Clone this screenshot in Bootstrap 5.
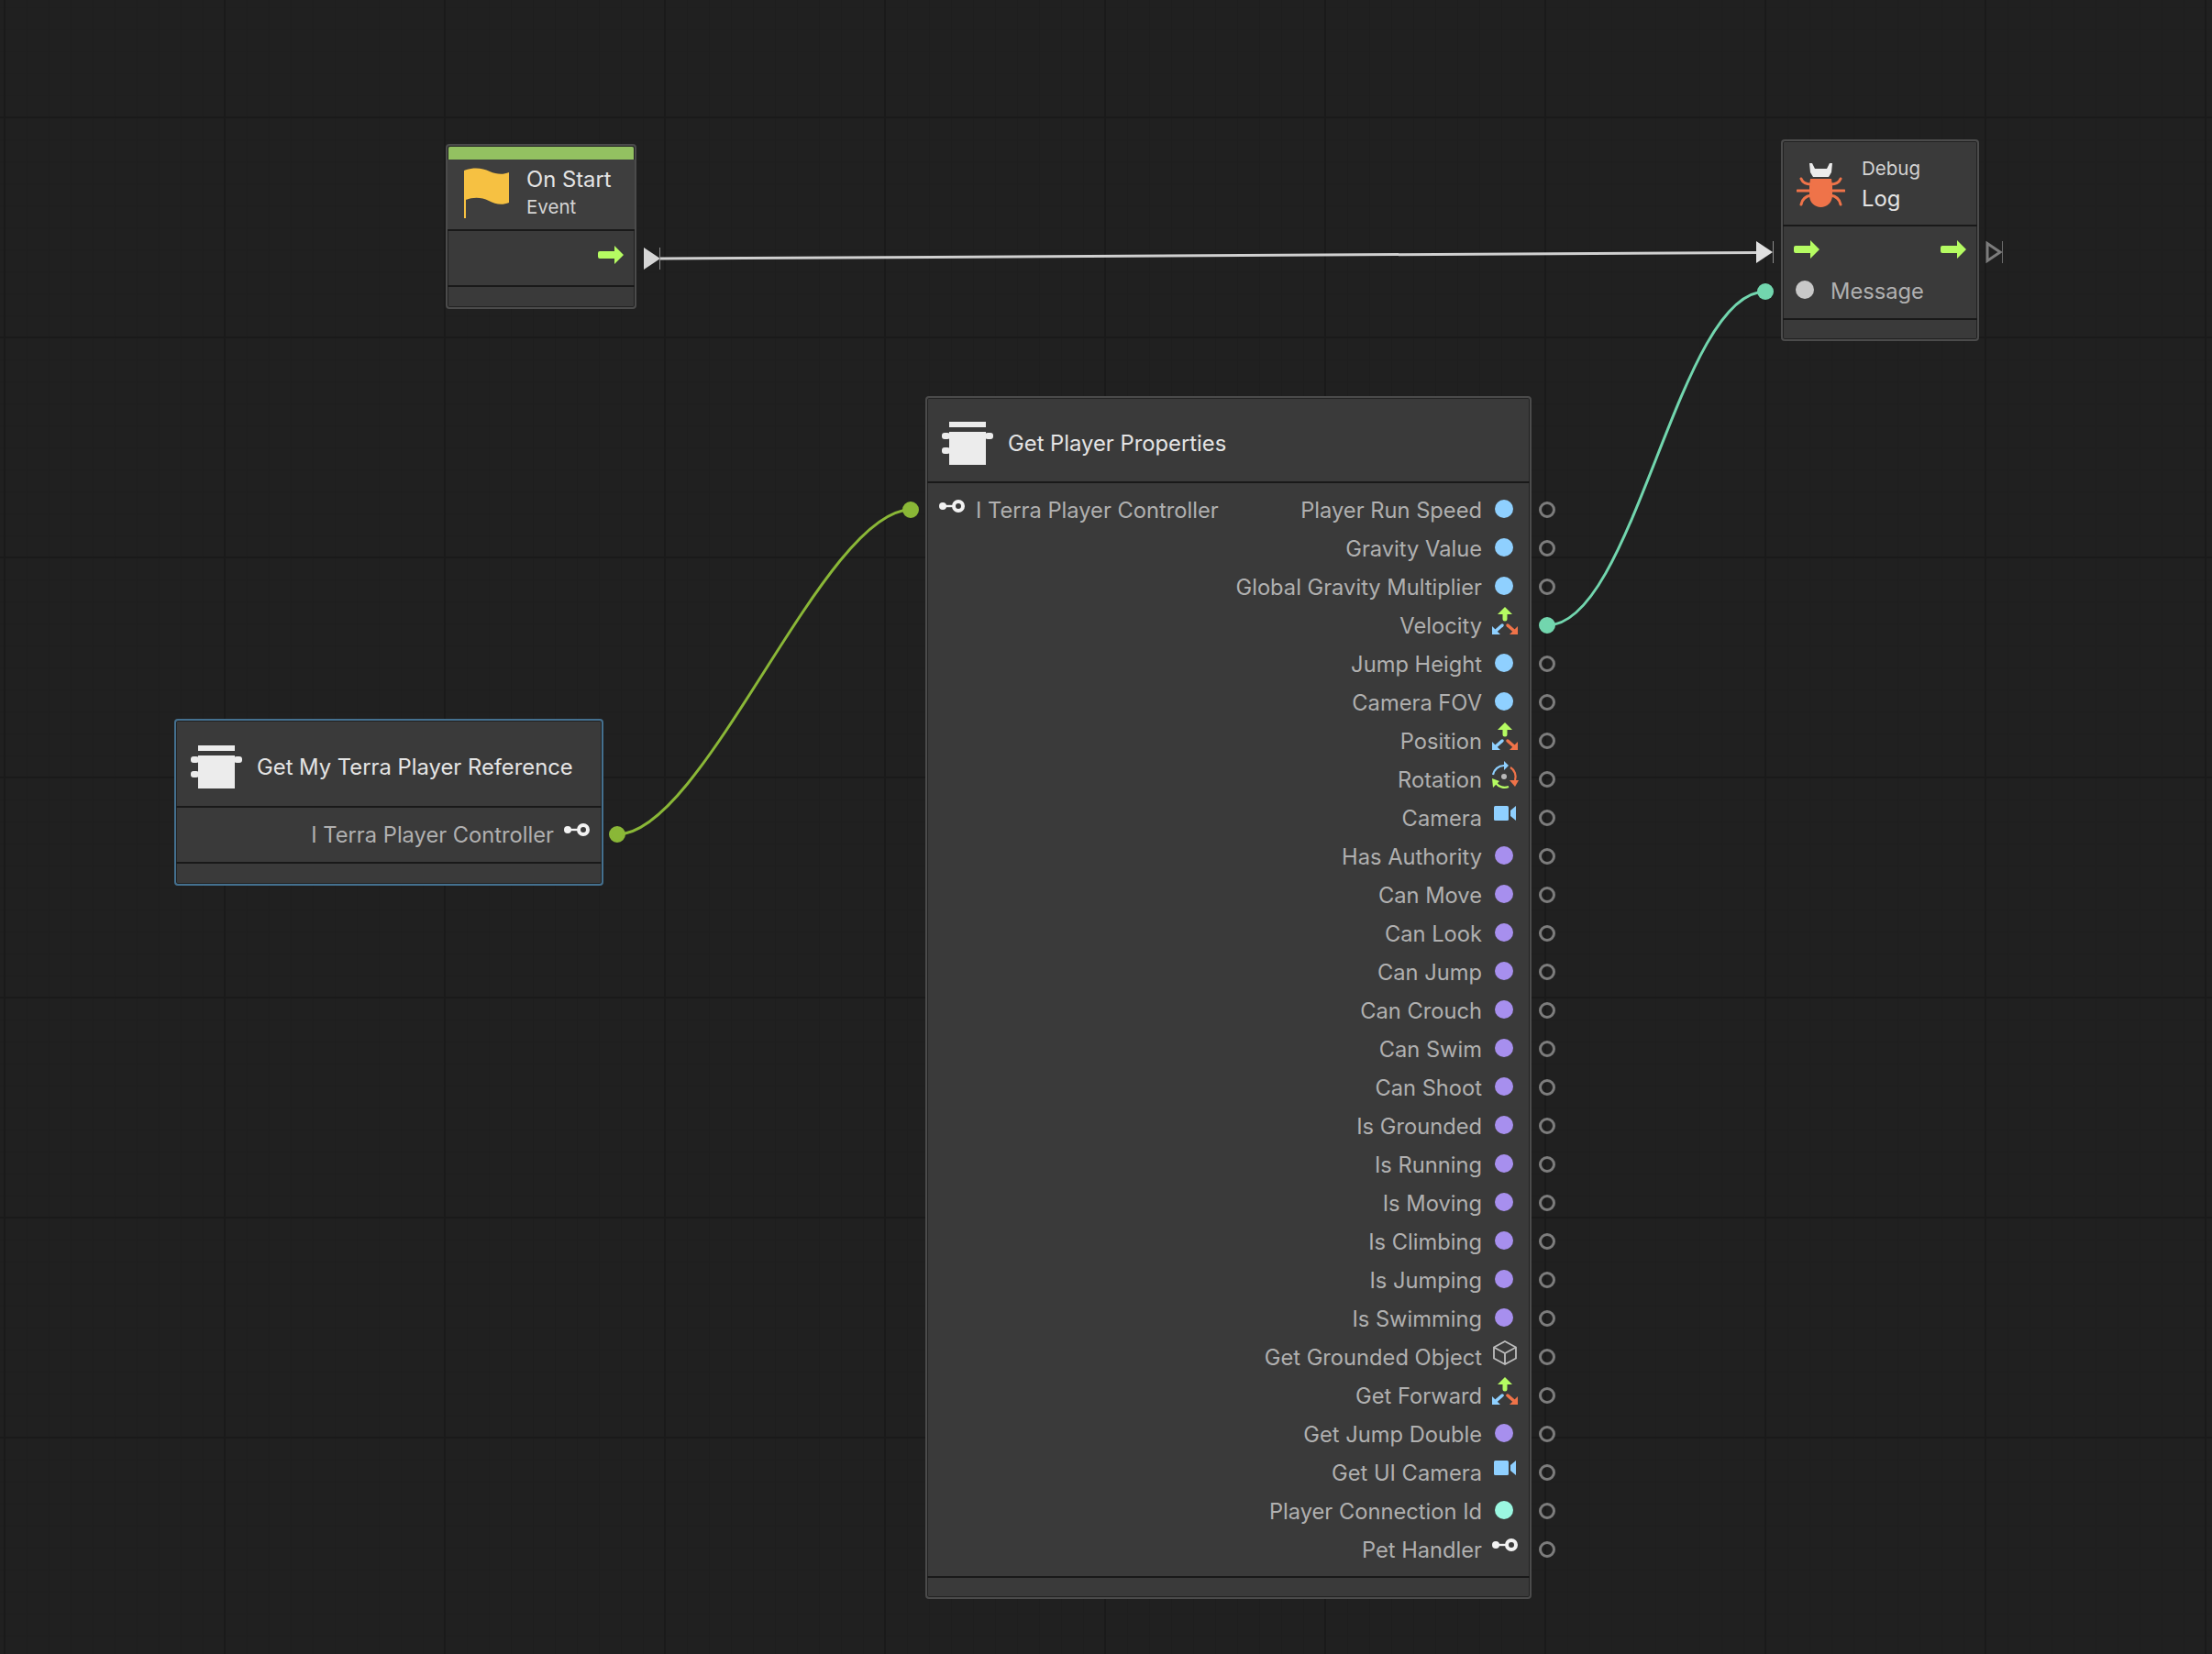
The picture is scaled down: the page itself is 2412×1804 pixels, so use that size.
<!DOCTYPE html>
<html lang="en">

<head>
    <meta charset="UTF-8">
    <title>Visual Script Graph</title>
    <link href="https://cdn.jsdelivr.net/npm/bootstrap@5.3.0/dist/css/bootstrap.min.css" rel="stylesheet">
    <style>
        html, body { height: 100%; margin: 0; background: #202020; }
        #graph {
            position: relative; width: 2412px; height: 1804px; overflow: hidden;
            font-family: "Inter", "Liberation Sans", sans-serif;
            background-color: #202020;
            background-image:
                linear-gradient(to right, #1a1a1a 2px, transparent 2px),
                linear-gradient(to bottom, #1a1a1a 2px, transparent 2px),
                linear-gradient(to right, #1e1e1e 1px, transparent 1px),
                linear-gradient(to bottom, #1e1e1e 1px, transparent 1px);
            background-size: 240px 240px, 240px 240px, 24px 24px, 24px 24px;
            background-position: 4px 0, 0 127px, 5px 0, 0 8px;
        }
        #wires { position: absolute; inset: 0; pointer-events: none; }

        /* nodes sit on a free canvas */
        .node {
            position: absolute;
            --bs-card-bg: #3a3a3a;
            --bs-card-border-width: 2px;
            --bs-card-border-color: #4b4b4b;
            --bs-card-border-radius: 4px;
            --bs-card-inner-border-radius: 2px;
            box-shadow: inset 0 0 0 1px #222;
        }
        .node-start { left: 486px; top: 157px; width: 208px; height: 180px; }
        .node-log { left: 1942px; top: 152px; width: 216px; height: 220px; }
        .node-ref { left: 190px; top: 784px; width: 468px; height: 182px; --bs-card-border-color: #44708f; }
        .node-props { left: 1009px; top: 432px; width: 661px; height: 1312px; }

        .node .card-header {
            background: transparent; height: 93px; flex: none;
            border-bottom: 2px solid #191919;
        }
        .node .card-body { padding: 8px 0; flex: 1 1 auto; }
        .node .card-footer { padding: 0; height: 24px; flex: none; background: transparent; border-top: 2px solid #191919; }
        .node-start .card-body { padding: 5px 0 0; }
        .node-log .card-body { padding: 7px 0 9px; }
        .node-ref .card-header { height: 95px; }

        .event-stripe { height: 14px; margin: 1px 1px 0; background: #93c161; border-radius: 2px 2px 0 0; }
        .node-title { font-size: 23.8px; color: #e4e4e4; line-height: 1; white-space: nowrap; }
        .node-sub { font-size: 20.5px; color: #d4d4d4; line-height: 1; white-space: nowrap; }
        .head-icon { flex: none; display: block; }

        .pin-row { position: relative; height: 42px; padding-right: 12px; }
        .pin-label { font-size: 23.7px; color: #b0b0b0; line-height: 1; white-space: nowrap; padding-top: 2px; }
        .pin-icon { flex: none; width: 30px; display: flex; justify-content: center; align-items: center; height: 42px; margin-left: 10px; }
        .pin-icon svg { display: block; margin-top: -10px; }
        .pin-dot { width: 20px; height: 20px; border-radius: 50%; margin: -3px 2px 0 0; flex: none; }
        .dot-float { background: #8fd0ff; }
        .dot-bool { background: #a78fee; }
        .dot-int { background: #9bf7e1; }
        .dot-string { background: #c8c8c8; }

        .pin-port {
            position: absolute; top: 50%; width: 18px; height: 18px; margin-top: -9px;
            border-radius: 50%; border: 3px solid #7c7c7c;
        }
        .port-right { right: -28px; }
        .port-left { left: -27px; }
        .port-teal { background: #72d6ae; border-color: #72d6ae; }
        .port-green { background: #8ab737; border-color: #8ab737; }
        .node-ref .port-right { right: -26px; }

        .node .h-start { height: 78px; padding: 0 0 4px 18px; gap: 18px; background: #3e3e3e; }
        .node .h-log { padding: 4px 0 0 15px; gap: 18px; }
        .node .h-func { padding: 8px 0 0 16px; gap: 16px; }
        .log-text { gap: 11px; }
        .flow-row { padding-left: 12px; margin-top: -3px; }
        .msg-row { padding-left: 14px; margin-top: 3px; }
        .msg-row .pin-label { margin-left: 16px; }
        .key-pin { padding-left: 13px; }
        .key-pin svg { margin-top: -8px; }
        .key-pin .pin-label { margin-left: 12px; }
    </style>
</head>

<body>
    <!-- iconos reutilizables -->
    <svg width="0" height="0" class="position-absolute">
        <defs>
            <symbol id="i-func" viewBox="0 0 56 47">
                <path fill="#ececec" d="M8 0h40v6H8zM8 11h40v36H8z"/>
                <rect x="0" y="12" width="9" height="7" rx="3" fill="#ececec"/>
                <rect x="0" y="28" width="9" height="7" rx="3" fill="#ececec"/>
                <rect x="47" y="12" width="9" height="7" rx="3" fill="#ececec"/>
            </symbol>
            <symbol id="i-flow" viewBox="0 0 28 20">
                <path fill="#b5fb62" d="M18 0l10 10-10 10v-6H2a2 2 0 0 1-2-2V8a2 2 0 0 1 2-2h16z"/>
            </symbol>
            <symbol id="i-key" viewBox="0 0 28 14">
                <circle cx="4" cy="7" r="4" fill="#f2f2f2"/>
                <path d="M4 7h14" stroke="#f2f2f2" stroke-width="2.4"/>
                <circle cx="21" cy="7" r="5" fill="none" stroke="#f2f2f2" stroke-width="4"/>
            </symbol>
            <symbol id="i-vector" viewBox="0 0 28 30">
                <path fill="#b5fb62" d="M14 0l8 8h-5.500v5a2.500 2.500 0 0 1-5 0V8H6z"/>
                <path fill="#8fd0ff" d="M0 21l9 9H0z"/>
                <path d="M3 27l8-7" stroke="#8fd0ff" stroke-width="3.500" stroke-linecap="round"/>
                <path fill="#ef7349" d="M28 21l-9 9h9z"/>
                <path d="M25 27l-8-7" stroke="#ef7349" stroke-width="3.500" stroke-linecap="round"/>
            </symbol>
            <symbol id="i-rotate" viewBox="0 0 29 30">
                <circle cx="13" cy="17" r="3" fill="#b8b8b8"/>
                <path d="M1 15A12 12 0 0 1 13 5" fill="none" stroke="#8fd0ff" stroke-width="2.200"/>
                <path d="M13 0l5 5-5 5z" fill="#8fd0ff"/>
                <path d="M20 7A12 12 0 0 1 25 21" fill="none" stroke="#ef7349" stroke-width="2.200"/>
                <path d="M19 21h10l-4 7z" fill="#ef7349"/>
                <path d="M18 28A12 12 0 0 1 4 24" fill="none" stroke="#b5fb62" stroke-width="2.200"/>
                <path d="M0 19l8 3-7 7z" fill="#b5fb62"/>
            </symbol>
            <symbol id="i-camera" viewBox="0 0 24 16">
                <rect width="16" height="16" rx="1.500" fill="#8fd0ff"/>
                <path fill="#8fd0ff" d="M18 5l6-5v16l-6-5z"/>
            </symbol>
            <symbol id="i-cube" viewBox="0 0 26 27">
                <path fill="none" stroke="#bdbdbd" stroke-width="1.800" d="M13 1l12 6.500v12L13 26 1 19.500v-12zM1 7.500l12 6.500 12-6.500M13 14v12"/>
            </symbol>
        </defs>
    </svg>

    <div id="graph">
        <svg id="wires" width="2412" height="1804" viewBox="0 0 2412 1804">
            <path d="M720 282L1916 275.500" fill="none" stroke="#d0d0d0" stroke-width="3"/>
            <path d="M702 270l18 12-18 12z" fill="#d6d6d6"/>
            <path d="M719.500 270v24" stroke="#8a8a8a" stroke-width="1"/>
            <path d="M1915 263l18 12-18 12z" fill="#e0e0e0"/>
            <path d="M1933.500 263v24" stroke="#8a8a8a" stroke-width="1"/>
            <path d="M2167 265.500l14 9.500-14 9.500z" fill="none" stroke="#7c7c7c" stroke-width="3"/>
            <path d="M2183.500 263v24" stroke="#6a6a6a" stroke-width="1"/>
            <path d="M673 910C768 910 898 556 993 556" fill="none" stroke="#8ab737" stroke-width="3"/>
            <path d="M1687 682C1782 682 1830 318 1925 318" fill="none" stroke="#72d6ae" stroke-width="3"/>
            <circle cx="1925" cy="318" r="9" fill="#72d6ae"/>
        </svg>

        <!-- On Start -->
        <div class="card node node-start">
            <div class="event-stripe"></div>
            <div class="card-header d-flex align-items-center h-start">
                <svg class="head-icon" width="50" height="55" viewBox="0 0 50 55">
                    <path fill="#f6c142" d="M0 3C10-1 20 0 28 4c7 3 14 4 21 1v33c-7 3-15 2-22-2-8-4-17-4-25-1v20H0z"/>
                </svg>
                <div class="d-flex flex-column gap-2">
                    <span class="node-title">On Start</span>
                    <span class="node-sub">Event</span>
                </div>
            </div>
            <div class="card-body">
                <div class="pin-row d-flex justify-content-end align-items-center">
                    <svg width="28" height="20"><use href="#i-flow"/></svg>
                </div>
            </div>
            <div class="card-footer"></div>
        </div>

        <!-- Debug Log -->
        <div class="card node node-log">
            <div class="card-header d-flex align-items-center h-log">
                <svg class="head-icon" width="53" height="50" viewBox="0 0 53 50">
                    <path fill="#ececec" d="M14 1l3 0 3 6h13l3-6 3 0-1 10-3 5H18l-3-5z"/>
                    <path fill="#ef7349" d="M15 18h23l1 8v10c0 8-6 13-12.500 13S14 44 14 36V26z"/>
                    <path fill="none" stroke="#ef7349" stroke-width="3" stroke-linecap="round" d="M5 18c2 5 6 6 11 6M48 18c-2 5-6 6-11 6M1 31h15M52 31H37M5 46c1-6 5-9 11-10M48 46c-1-6-5-9-11-10"/>
                </svg>
                <div class="d-flex flex-column log-text">
                    <span class="node-sub">Debug</span>
                    <span class="node-title">Log</span>
                </div>
            </div>
            <div class="card-body">
                <div class="pin-row flow-row d-flex justify-content-between align-items-center">
                    <svg width="28" height="20"><use href="#i-flow"/></svg>
                    <svg width="28" height="20"><use href="#i-flow"/></svg>
                </div>
                <div class="pin-row msg-row d-flex align-items-center">
                    <span class="pin-dot dot-string"></span>
                    <span class="pin-label">Message</span>
                </div>
            </div>
            <div class="card-footer"></div>
        </div>

        <!-- Get My Terra Player Reference -->
        <div class="card node node-ref">
            <div class="card-header d-flex align-items-center h-func">
                <svg class="head-icon" width="56" height="47"><use href="#i-func"/></svg>
                <span class="node-title">Get My Terra Player Reference</span>
            </div>
            <div class="card-body">
                <div class="pin-row d-flex justify-content-end align-items-center">
                    <span class="pin-label">I Terra Player Controller</span>
                    <span class="pin-icon"><svg width="28" height="14"><use href="#i-key"/></svg></span>
                    <span class="pin-port port-right port-green"></span>
                </div>
            </div>
            <div class="card-footer"></div>
        </div>

        <!-- Get Player Properties -->
        <div class="card node node-props">
            <div class="card-header d-flex align-items-center h-func">
                <svg class="head-icon" width="56" height="47"><use href="#i-func"/></svg>
                <span class="node-title">Get Player Properties</span>
            </div>
            <div class="card-body" id="propList"></div>
            <div class="card-footer"></div>
        </div>
    </div>

    <script src="https://cdn.jsdelivr.net/npm/bootstrap@5.3.0/dist/js/bootstrap.bundle.min.js"></script>
    <script>
        // nombre del pin y tipo
        const props = [
            ["Player Run Speed", "float"], ["Gravity Value", "float"], ["Global Gravity Multiplier", "float"],
            ["Velocity", "vector"], ["Jump Height", "float"], ["Camera FOV", "float"],
            ["Position", "vector"], ["Rotation", "rotate"], ["Camera", "camera"],
            ["Has Authority", "bool"], ["Can Move", "bool"], ["Can Look", "bool"], ["Can Jump", "bool"],
            ["Can Crouch", "bool"], ["Can Swim", "bool"], ["Can Shoot", "bool"], ["Is Grounded", "bool"],
            ["Is Running", "bool"], ["Is Moving", "bool"], ["Is Climbing", "bool"], ["Is Jumping", "bool"],
            ["Is Swimming", "bool"], ["Get Grounded Object", "cube"], ["Get Forward", "vector"],
            ["Get Jump Double", "bool"], ["Get UI Camera", "camera"], ["Player Connection Id", "int"],
            ["Pet Handler", "key"]
        ];
        const iconSize = { vector: [28, 30], rotate: [29, 30], camera: [24, 16], cube: [26, 27], key: [28, 14] };

        function pinIcon(type) {
            if (!iconSize[type]) return `<span class="pin-dot dot-${type}"></span>`;
            const [w, h] = iconSize[type];
            return `<svg width="${w}" height="${h}"><use href="#i-${type}"/></svg>`;
        }

        document.getElementById("propList").innerHTML = props.map(([name, type], i) => `
            <div class="pin-row d-flex align-items-center ${i === 0 ? "justify-content-between" : "justify-content-end"}">
                ${i === 0 ? `<div class="d-flex align-items-center key-pin">
                    <svg width="28" height="14"><use href="#i-key"/></svg>
                    <span class="pin-label">I Terra Player Controller</span>
                    <span class="pin-port port-left port-green"></span>
                </div>` : ""}
                <div class="d-flex align-items-center">
                    <span class="pin-label">${name}</span>
                    <span class="pin-icon">${pinIcon(type)}</span>
                </div>
                <span class="pin-port port-right ${name === "Velocity" ? "port-teal" : ""}"></span>
            </div>`).join("");
    </script>
</body>

</html>
